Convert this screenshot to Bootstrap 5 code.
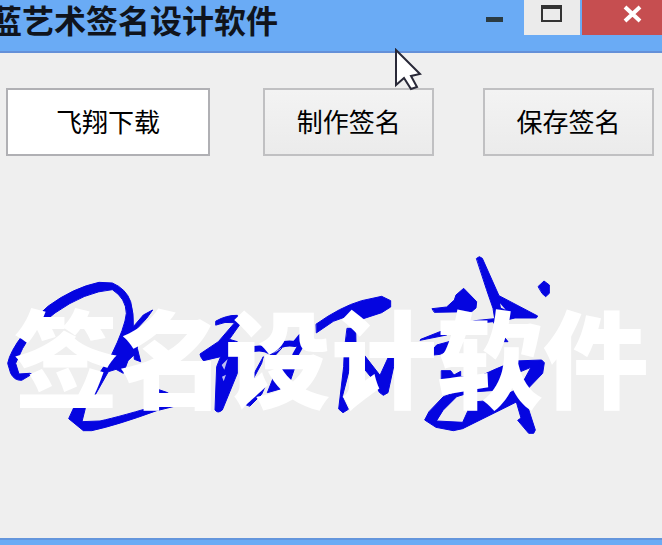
<!DOCTYPE html>
<html lang="zh-CN">
<head>
<meta charset="utf-8">
<meta name="viewport" content="width=device-width, initial-scale=1">
<title>蓝艺术签名设计软件</title>
<link href="https://cdn.jsdelivr.net/npm/bootstrap@5.3.0/dist/css/bootstrap.min.css" rel="stylesheet">
<style>
body { background: #efefef; font-family: "Noto Sans CJK SC", sans-serif; color: #000; overflow: hidden; }
.titlebar { height: 53px; background: #6aabf5; border-bottom: 2px solid #6490d8; }
.app-title { font-size: 32px; line-height: 38px; font-weight: 700; color: #10141c; margin-left: -10px; white-space: nowrap; }
.win-btn { border: 0; padding: 0; height: 35px; width: 56px; background: transparent; display: block; }
.win-btn svg { display: block; }
.win-max { background: #ebebeb; }
.win-close { background: #c64e50; width: 80px; margin-left: 2px; }
.tools { padding: 35px 8px 0 6px; gap: 49px; }
.tool { height: 68px; min-width: 0; border: 2px solid #c0c0c2; border-radius: 0; font-size: 26px; line-height: 32px; padding: 0 0 2px; text-align: center; color: #000; }
.tool-name { flex: 6 1 0; background: #fff; border-color: #b0b0b4; padding: 0 0 4px; }
.tool-btn { flex: 5 1 0; background: linear-gradient(#f3f3f3, #ebebeb); }
.pointer { top: 48px; left: 59%; }
.caption { top: 52%; left: 0; right: 0; font-size: 16vw; line-height: 1; font-weight: 900; color: #fff; white-space: nowrap; transform: translateY(-50%); }
.signature { fill: #0505e0; stroke: #0505e0; stroke-width: 3; stroke-linejoin: round; stroke-linecap: round; }
.bottom-edge { height: 7px; background: #6aabf5; border-top: 2px solid #6496dc; }
</style>
<script src="https://cdn.jsdelivr.net/npm/bootstrap@5.3.0/dist/js/bootstrap.bundle.min.js"></script>
</head>
<body>
<div class="d-flex flex-column min-vh-100 position-relative">
  <header class="titlebar d-flex justify-content-between align-items-start">
    <h1 class="app-title mb-0">蓝艺术签名设计软件</h1>
    <div class="d-flex">
      <button type="button" class="win-btn" aria-label="最小化"><svg width="56" height="35"><path d="M18 17h17v5H18z" fill="#2b3b42"/></svg></button>
      <button type="button" class="win-btn win-max" aria-label="最大化"><svg width="56" height="35"><path d="M17 5h21v17H17zM19 9v11h17V9z" fill="#333" fill-rule="evenodd"/></svg></button>
      <button type="button" class="win-btn win-close" aria-label="关闭"><svg width="80" height="35"><path d="M43 7L58 21M58 7L43 21" stroke="#fff" stroke-width="4"/></svg></button>
    </div>
  </header>
  <main class="flex-grow-1 d-flex flex-column">
    <div class="tools d-flex">
      <input class="tool tool-name me-1" type="text" value="飞翔下载" aria-label="姓名">
      <button type="button" class="tool tool-btn">制作签名</button>
      <button type="button" class="tool tool-btn">保存签名</button>
    </div>
    <div class="position-relative flex-grow-1">
      <svg class="signature d-block w-100" viewBox="0 156 662 382" role="img" aria-label="签名">
        <g transform="translate(0 240) scale(.33333)">
          <path d="M95 403L65 421Q43 422 32 400L23 370Q30 335 68 285L105 235L145 198Q220 143 297 127L337 129Q378 146 392 185Q402 222 400 260L430 225L458 210L440 235L412 265V325L422 365L403 358L402 345L384 362L370 400L348 388L325 395L285 466L256 505L246 545L300 543Q360 530 500 488L465 460V445L500 457L560 490L470 512Q350 556 275 572H250L206 536L225 495L298 400L333 348Q376 260 379 220Q378 175 337 149Q255 155 165 219L100 272L68 325L47 370L57 402L88 400Z"/>
        </g>
        <g transform="translate(200 240) scale(.33333)">
          <path d="M48 243Q80 225 112 226L122 250L88 298L112 305V400L67 510Q53 522 45 510L50 380L62 350L10 362L2 350L0 342L55 305L104 248Q75 243 48 255Z"/>
          <path d="M65 375L83 357L73 389ZM66 410L78 404L71 424Z" fill="#bcbcf0" stroke="none"/>
          <path d="M158 328Q188 320 213 336Q240 305 285 312L302 291L300 320L286 345" fill="none" stroke-width="18"/>
          <path d="M245 325L222 350H205M290 330L282 390L265 440L202 458L225 400L245 378L275 380" />
          <path d="M157 410L190 350L185 370L158 420ZM137 493L195 440L185 463L150 498Z"/>
          <path d="M349 252Q420 201 485 182L545 169L572 182V201L545 218L490 236L438 230L400 244L350 278Z"/>
          <path d="M442 265H467L468 310L440 420L427 470L445 508L429 518L416 507L431 380L433 330Z"/>
          <path d="M479 348L491 343L540 406L568 345H581V380L564 458L550 466L538 457L520 420L479 370Z"/>
        </g>
        <g transform="translate(400 240) scale(.33333)">
          <path d="M230 55L238 50L247 55L297 167L413 228L409 234L345 234L320 240L308 285L324 305H307L280 245L175 255L140 285L60 301L62 298L120 275L225 242L284 236L279 205L260 150Z"/>
          <path d="M300 190L303 203L317 209Z" fill="#efefef" stroke="none"/>
          <path d="M97 206L140 201L163 180L168 165L191 145L230 185L228 204L215 215L104 217ZM415 139L432 123L448 135V160L437 170L427 161ZM87 342L110 315L180 296V315L120 343L92 346Z"/>
          <path d="M125 392H152L162 405L182 394V410L230 413L285 388L345 363L425 360L433 368L428 400L380 450L365 482L380 490L406 570L401 580H386L353 541L363 534L349 486L188 566L160 572L108 562L74 540L87 515L130 470L175 455L180 425L125 418ZM110 543L188 547L203 514V460L170 470L130 510ZM230 455L300 450L325 410L393 382L375 415L345 450L290 480L230 485Z" fill-rule="evenodd"/>
        </g>
      </svg>
      <div class="caption position-absolute text-center">签名设计软件</div>
    </div>
  </main>
  <div class="bottom-edge"></div>
  <svg class="pointer position-absolute" width="32" height="44" aria-hidden="true"><path d="M5 2V37L13 30L20 41L26 39L20 28L29 26Z" fill="#fff" stroke="#292938" stroke-width="2"/></svg>
</div>
</body>
</html>
